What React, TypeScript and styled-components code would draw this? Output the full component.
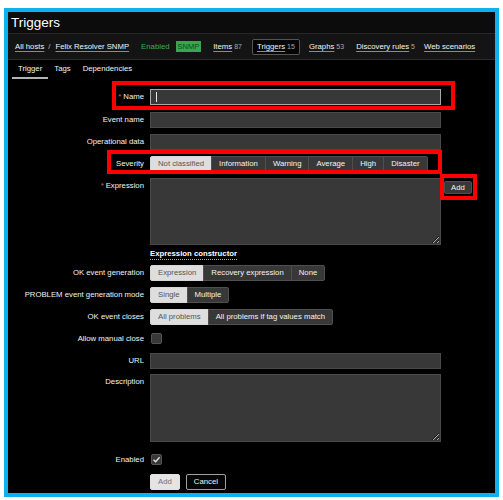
import React from 'react';
import styled, { createGlobalStyle } from 'styled-components';

const GlobalStyle = createGlobalStyle`
  body {
    margin: 0;
    background: #fff;
    font-family: 'Liberation Sans', Arial, sans-serif;
  }
`;

const Frame = styled.div`
  position: relative;
  box-sizing: border-box;
  width: 495px;
  height: 489px;
  margin: 8px 0 0 4px;
  border: 4px solid #0cb1ef;
  background: #000;
  overflow: hidden;
  color: #f4f4f4;
  font-size: 7.75px;
`;

const TitleBar = styled.header`
  height: 21px;
  padding-left: 3px;
  background: #0c0c0c;
  border-bottom: 1px solid #272727;
  font-size: 13.5px;
  line-height: 21px;
  color: #fff;
`;

const NavBar = styled.nav`
  display: flex;
  align-items: center;
  height: 25px;
  padding-left: 7px;
  background: #141414;
  border-bottom: 1px solid #2a2a2a;
  white-space: nowrap;
`;

const NavItem = styled.span<{ $ml?: number; $boxed?: boolean }>`
  display: inline-flex;
  align-items: center;
  margin-left: ${p => p.$ml ?? 0}px;
  ${p =>
    p.$boxed &&
    `
    height: 16px;
    box-sizing: border-box;
    padding: 0 4px;
    border: 1px solid #555;
    border-radius: 2px;
    background: #050505;
  `}
`;

const NavLink = styled.span`
  color: #f4f4f4;
  text-decoration: underline;
  text-decoration-color: #8a8a8a;
  text-underline-offset: 2px;
`;

const Count = styled.span`
  margin-left: 2px;
  font-size: 7px;
  color: #a8a8a8;
`;

const Slash = styled.span`
  margin-left: 4px;
  color: #bdbdbd;
`;

const StatusText = styled.span<{ $ml?: number }>`
  margin-left: ${p => p.$ml ?? 0}px;
  color: #3cb04a;
`;

const Badge = styled.span`
  margin-left: 6px;
  height: 11px;
  line-height: 11px;
  padding: 0 2px;
  background: #36a64f;
  color: #124a1d;
  font-size: 7.5px;
`;

const TabBar = styled.div`
  display: flex;
  height: 19px;
  padding-left: 4px;
`;

const Tab = styled.span<{ $active?: boolean }>`
  display: flex;
  align-items: center;
  padding: 0 6px;
  border-bottom: 2px solid ${p => (p.$active ? '#b4b4b4' : 'transparent')};
  color: #f4f4f4;
`;

const Form = styled.div`
  padding-top: 10px;
`;

const Row = styled.div<{ $mt?: number }>`
  display: flex;
  align-items: flex-start;
  margin-top: ${p => p.$mt ?? 6}px;
`;

const Label = styled.div`
  flex-shrink: 0;
  width: 136px;
  margin-right: 6px;
  line-height: 16px;
  text-align: right;
  white-space: nowrap;
  color: #f4f4f4;
`;

const Asterisk = styled.span`
  margin-right: 2px;
  color: #e45959;
`;

const FieldWrap = styled.div`
  position: relative;
  display: flex;
  align-items: flex-start;
  gap: 3px;
`;

const TextInput = styled.input<{ $focused?: boolean }>`
  box-sizing: border-box;
  display: block;
  width: 291px;
  height: 16px;
  margin: 0;
  padding: 0 4px;
  background: #383838;
  border: 1px solid ${p => (p.$focused ? '#a8a8a8' : '#4a4a4a')};
  border-radius: 0;
  color: #f2f2f2;
  font: inherit;
  outline: none;
`;

const Caret = styled.span`
  position: absolute;
  left: 6px;
  top: 3px;
  width: 1px;
  height: 10px;
  background: #e6e6e6;
`;

const TextArea = styled.textarea<{ $h: number }>`
  box-sizing: border-box;
  display: block;
  width: 291px;
  height: ${p => p.$h}px;
  margin: 0;
  padding: 2px 4px;
  background: #383838;
  border: 1px solid #4a4a4a;
  border-radius: 0;
  color: #f2f2f2;
  font: inherit;
  outline: none;
  resize: vertical;
  color-scheme: dark;
`;

const SmallButton = styled.span`
  box-sizing: border-box;
  margin-top: 3px;
  height: 13px;
  line-height: 11px;
  padding: 0 6px;
  background: #383838;
  border: 1px solid #4f4f4f;
  border-radius: 2px;
  color: #f4f4f4;
`;

const Segmented = styled.div`
  display: flex;
`;

const Segment = styled.span<{ $active?: boolean }>`
  box-sizing: border-box;
  height: 16px;
  line-height: 14px;
  padding: 0 7px;
  border: 1px solid ${p => (p.$active ? '#d6d6d6' : '#4f4f4f')};
  background: ${p => (p.$active ? '#dedede' : '#383838')};
  color: ${p => (p.$active ? '#555' : '#f4f4f4')};
  white-space: nowrap;

  & + & {
    margin-left: -1px;
  }
  &:first-child {
    border-radius: 2px 0 0 2px;
  }
  &:last-child {
    border-radius: 0 2px 2px 0;
  }
`;

const ConstructorLink = styled.span`
  display: inline-block;
  margin-top: 3px;
  line-height: 10px;
  font-weight: bold;
  color: #fff;
  border-bottom: 1px dotted #b0b0b0;
`;

const Checkbox = styled.span`
  box-sizing: border-box;
  display: flex;
  align-items: center;
  justify-content: center;
  width: 11px;
  height: 11px;
  margin: 2px 0 0 1px;
  background: #383838;
  border: 1px solid #555;
  border-radius: 2px;
`;

const ActionButton = styled.span<{ $primary?: boolean }>`
  box-sizing: border-box;
  height: 16px;
  line-height: 14px;
  padding: 0 7px;
  border-radius: 2px;
  border: 1px solid ${p => (p.$primary ? '#e2e2e2' : '#a0a0a0')};
  background: ${p => (p.$primary ? '#e4e4e4' : '#050505')};
  color: ${p => (p.$primary ? '#707070' : '#f4f4f4')};
`;

const Buttons = styled.div`
  display: flex;
  gap: 6px;
`;

const Highlight = styled.div<{ $x: number; $y: number; $w: number; $h: number }>`
  position: absolute;
  left: ${p => p.$x}px;
  top: ${p => p.$y}px;
  width: ${p => p.$w}px;
  height: ${p => p.$h}px;
  box-sizing: border-box;
  border: 4px solid #ff0000;
  pointer-events: none;
`;

const severities = ['Not classified', 'Information', 'Warning', 'Average', 'High', 'Disaster'];

const Choice = ({ options, active }: { options: string[]; active: number }) => (
  <Segmented>
    {options.map((o, i) => (
      <Segment key={o} $active={i === active}>
        {o}
      </Segment>
    ))}
  </Segmented>
);

const App = () => (
  <>
    <GlobalStyle />
    <Frame>
      <TitleBar>Triggers</TitleBar>
      <NavBar>
        <NavItem>
          <NavLink>All hosts</NavLink>
        </NavItem>
        <Slash>/</Slash>
        <NavItem $ml={5}>
          <NavLink>Felix Resolver SNMP</NavLink>
        </NavItem>
        <StatusText $ml={12}>Enabled</StatusText>
        <Badge>SNMP</Badge>
        <NavItem $ml={12}>
          <NavLink>Items</NavLink>
          <Count>87</Count>
        </NavItem>
        <NavItem $ml={10} $boxed>
          <NavLink>Triggers</NavLink>
          <Count>15</Count>
        </NavItem>
        <NavItem $ml={9}>
          <NavLink>Graphs</NavLink>
          <Count>53</Count>
        </NavItem>
        <NavItem $ml={12}>
          <NavLink>Discovery rules</NavLink>
          <Count>5</Count>
        </NavItem>
        <NavItem $ml={9}>
          <NavLink>Web scenarios</NavLink>
        </NavItem>
      </NavBar>
      <TabBar>
        <Tab $active>Trigger</Tab>
        <Tab>Tags</Tab>
        <Tab>Dependencies</Tab>
      </TabBar>

      <Form>
        <Row $mt={0}>
          <Label>
            <Asterisk>*</Asterisk>Name
          </Label>
          <FieldWrap>
            <TextInput $focused readOnly />
            <Caret />
          </FieldWrap>
        </Row>
        <Row $mt={7}>
          <Label>Event name</Label>
          <TextInput readOnly />
        </Row>
        <Row>
          <Label>Operational data</Label>
          <TextInput readOnly />
        </Row>
        <Row>
          <Label>Severity</Label>
          <Choice options={severities} active={0} />
        </Row>
        <Row>
          <Label>
            <Asterisk>*</Asterisk>Expression
          </Label>
          <FieldWrap>
            <TextArea $h={67} readOnly />
            <SmallButton>Add</SmallButton>
          </FieldWrap>
        </Row>
        <Row $mt={1}>
          <Label />
          <ConstructorLink>Expression constructor</ConstructorLink>
        </Row>
        <Row $mt={5}>
          <Label>OK event generation</Label>
          <Choice options={['Expression', 'Recovery expression', 'None']} active={0} />
        </Row>
        <Row>
          <Label>PROBLEM event generation mode</Label>
          <Choice options={['Single', 'Multiple']} active={0} />
        </Row>
        <Row>
          <Label>OK event closes</Label>
          <Choice options={['All problems', 'All problems if tag values match']} active={0} />
        </Row>
        <Row>
          <Label>Allow manual close</Label>
          <Checkbox />
        </Row>
        <Row>
          <Label>URL</Label>
          <TextInput readOnly />
        </Row>
        <Row $mt={5}>
          <Label>Description</Label>
          <TextArea $h={68} readOnly />
        </Row>
        <Row $mt={10}>
          <Label>Enabled</Label>
          <Checkbox>
            <svg width="9" height="9" viewBox="0 0 9 9">
              <polyline points="1.5,4.8 3.6,6.8 7.6,2.2" fill="none" stroke="#e6e6e6" strokeWidth="1.3" />
            </svg>
          </Checkbox>
        </Row>
        <Row>
          <Label />
          <Buttons>
            <ActionButton $primary>Add</ActionButton>
            <ActionButton>Cancel</ActionButton>
          </Buttons>
        </Row>
      </Form>

      <Highlight $x={104} $y={69} $w={343} $h={29} />
      <Highlight $x={99} $y={138} $w={335} $h={24} />
      <Highlight $x={432} $y={162} $w={37} $h={26} />
    </Frame>
  </>
);

export default App;
